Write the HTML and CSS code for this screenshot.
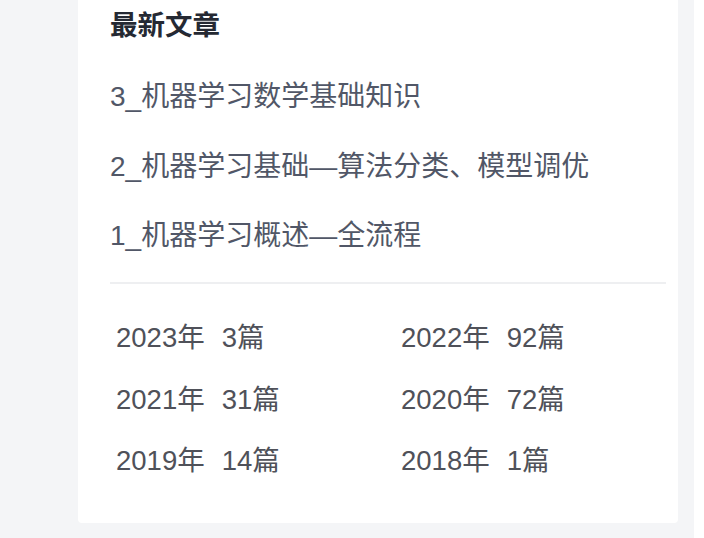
FILE: index.html
```html
<!DOCTYPE html>
<html lang="zh">
<head>
<meta charset="utf-8">
<title>最新文章</title>
<link rel="stylesheet" href="styles.css">
</head>
<body>
<div class="page">
  <main class="main">
    <section class="card">
      <h3 class="title">最新文章</h3>
      <ul class="links">
        <li><a href="#">3_机器学习数学基础知识</a></li>
        <li><a href="#">2_机器学习基础—算法分类、模型调优</a></li>
        <li><a href="#">1_机器学习概述—全流程</a></li>
      </ul>
      <div class="divider"></div>
      <ul class="archive">
        <li><span>2023年</span><span>3篇</span></li>
        <li><span>2022年</span><span>92篇</span></li>
        <li><span>2021年</span><span>31篇</span></li>
        <li><span>2020年</span><span>72篇</span></li>
        <li><span>2019年</span><span>14篇</span></li>
        <li><span>2018年</span><span>1篇</span></li>
      </ul>
    </section>
  </main>
  <aside class="strip"></aside>
</div>
</body>
</html>
```
FILE: styles.css
```css
* { box-sizing: border-box; }
html, body { margin: 0; padding: 0; }
body {
  background: #f4f5f7;
  font-family: "Liberation Sans", "Noto Sans CJK SC", sans-serif;
}
.page {
  display: flex;
  min-height: 538px;
}
.main {
  flex: 1;
  padding: 0 16px 14px 78px;
}
.card {
  width: 600px;
  background: #fff;
  border-radius: 0 0 4px 4px;
  padding: 6px 12px 42px 32px;
}
.title {
  margin: 0;
  font-size: 27.5px;
  line-height: 40px;
  font-weight: bold;
  color: #252933;
}
.links {
  list-style: none;
  margin: 31px 0 0;
  padding: 0;
  display: flex;
  flex-direction: column;
  gap: 29.5px;
}
.links a {
  display: block;
  font-size: 28px;
  line-height: 40px;
  color: #515767;
  text-decoration: none;
}
.divider {
  margin-top: 26px;
  height: 2px;
  background: #eeeff1;
}
.archive {
  list-style: none;
  margin: 34px 0 0 6px;
  padding: 0;
  display: grid;
  grid-template-columns: 285px 1fr;
  row-gap: 21.5px;
}
.archive li {
  display: flex;
  gap: 17px;
  font-size: 27.5px;
  line-height: 40px;
  color: #4f5159;
}
.strip {
  width: 10px;
  background: #fff;
}
```
